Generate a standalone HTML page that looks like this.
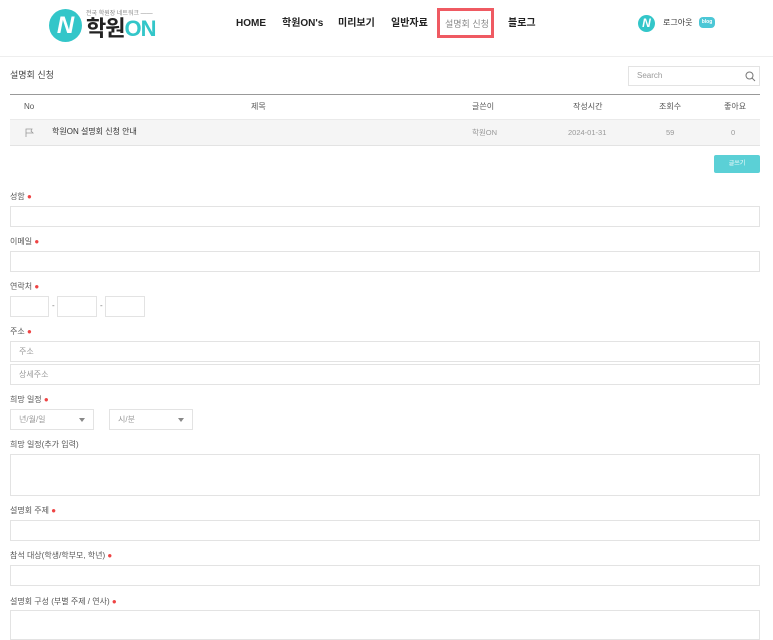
<!DOCTYPE html>
<html><head><meta charset="utf-8"><style>
*{box-sizing:border-box;margin:0;padding:0}
body{width:773px;height:627px;overflow:hidden;background:#fff;font-family:"Liberation Sans","Noto Sans CJK KR",sans-serif;color:#333;position:relative}
.a{position:absolute;line-height:12px;white-space:nowrap}
.nav{font-size:10px;font-weight:bold;color:#222;top:18px}
.lbl{font-size:8px;color:#555;left:10px}
.lbl i{color:#e44;font-style:normal;font-size:8px}
.inp{border:1px solid #e3e3e3;background:#fff;height:21px}
.ph{font-size:8px;color:#999;padding:5px 0 0 8px;line-height:10px}
.th{font-size:8px;color:#555;top:101px}
.td{font-size:7.5px;color:#999;top:127px}
</style></head><body>
<!-- header -->
<div class="a" style="left:49px;top:9px;width:33px;height:33px;border-radius:50%;background:#33c6c9;color:#fff;font-weight:bold;font-style:italic;font-size:24px;text-align:center;line-height:33px">N</div>
<div class="a" style="left:86px;top:8px;font-size:6px;color:#888">전국 학원장 네트워크 ——</div>
<div class="a" style="left:86px;top:17px;font-size:22px;line-height:24px;font-weight:bold;color:#222;letter-spacing:-1px">학원<span style="color:#33c6c9">ON</span></div>
<div class="a nav" style="left:236px">HOME</div>
<div class="a nav" style="left:282px">학원ON's</div>
<div class="a nav" style="left:338px">미리보기</div>
<div class="a nav" style="left:391px">일반자료</div>
<div class="a" style="left:437px;top:8px;width:57px;height:30px;border:3px solid #ef5a62"></div>
<div class="a" style="left:445px;top:18px;font-size:9px;color:#888">설명회 신청</div>
<div class="a nav" style="left:508px">블로그</div>
<div class="a" style="left:638px;top:15px;width:17px;height:17px;border-radius:50%;background:#33c6c9;color:#fff;font-weight:bold;font-style:italic;font-size:12px;text-align:center;line-height:17px">N</div>
<div class="a" style="left:663px;top:17px;font-size:8px;color:#333">로그아웃</div>
<div class="a" style="left:699px;top:17px;width:16px;height:11px;border-radius:4px;background:#4cc7d6;color:#fff;font-size:5px;font-weight:bold;text-align:center;line-height:11px">blog</div>
<div class="a" style="left:0;top:56px;width:773px;height:1px;background:#eee"></div>
<!-- board -->
<div class="a" style="left:10px;top:69px;font-size:9px;color:#444">설명회 신청</div>
<div class="a inp" style="left:628px;top:66px;width:132px;height:20px"><div class="ph" style="padding-top:4px">Search</div></div>
<svg class="a" style="left:745px;top:71px" width="11" height="11"><circle cx="4.5" cy="4.5" r="3.5" fill="none" stroke="#777" stroke-width="1"/><path d="M7 7L10 10" stroke="#777"/></svg>
<div class="a" style="left:10px;top:94px;width:750px;height:1px;background:#999"></div>
<div class="a th" style="left:24px">No</div>
<div class="a th" style="left:251px">제목</div>
<div class="a th" style="left:472px">글쓴이</div>
<div class="a th" style="left:573px">작성시간</div>
<div class="a th" style="left:659px">조회수</div>
<div class="a th" style="left:724px">좋아요</div>
<div class="a" style="left:10px;top:119px;width:750px;height:27px;background:#f5f5f5;border-top:1px solid #eaeaea;border-bottom:1px solid #e3e3e3"></div>
<svg class="a" style="left:25px;top:128px" width="9" height="9"><path d="M1 9V1H7L6 3L8 5H1" fill="none" stroke="#999" stroke-width=".8"/></svg>
<div class="a" style="left:52px;top:126px;font-size:8px;color:#333">학원ON 설명회 신청 안내</div>
<div class="a td" style="left:472px">학원ON</div>
<div class="a td" style="left:568px">2024-01-31</div>
<div class="a td" style="left:666px">59</div>
<div class="a td" style="left:731px">0</div>
<div class="a" style="left:714px;top:155px;width:46px;height:18px;background:#5bd0d6;border-radius:2px;color:#fff;font-size:6px;text-align:center;line-height:18px">글쓰기</div>
<!-- form -->
<div class="a lbl" style="top:191px">성함 <i>●</i></div>
<div class="a inp" style="left:10px;top:206px;width:750px"></div>
<div class="a lbl" style="top:236px">이메일 <i>●</i></div>
<div class="a inp" style="left:10px;top:251px;width:750px"></div>
<div class="a lbl" style="top:281px">연락처 <i>●</i></div>
<div class="a inp" style="left:10px;top:296px;width:39px"></div>
<div class="a" style="left:52px;top:300px;font-size:8px;color:#777">-</div>
<div class="a inp" style="left:57px;top:296px;width:40px"></div>
<div class="a" style="left:100px;top:300px;font-size:8px;color:#777">-</div>
<div class="a inp" style="left:105px;top:296px;width:40px"></div>
<div class="a lbl" style="top:326px">주소 <i>●</i></div>
<div class="a inp" style="left:10px;top:341px;width:750px"><div class="ph">주소</div></div>
<div class="a inp" style="left:10px;top:364px;width:750px"><div class="ph">상세주소</div></div>
<div class="a lbl" style="top:394px">희망 일정 <i>●</i></div>
<div class="a inp" style="left:10px;top:409px;width:84px"><div class="ph">년/월/일</div></div>
<div class="a" style="left:79px;top:418px;width:0;height:0;border-left:3px solid transparent;border-right:3px solid transparent;border-top:4px solid #888"></div>
<div class="a inp" style="left:109px;top:409px;width:84px"><div class="ph">시/분</div></div>
<div class="a" style="left:178px;top:418px;width:0;height:0;border-left:3px solid transparent;border-right:3px solid transparent;border-top:4px solid #888"></div>
<div class="a lbl" style="top:439px">희망 일정(추가 입력)</div>
<div class="a inp" style="left:10px;top:454px;width:750px;height:42px"></div>
<div class="a lbl" style="top:505px">설명회 주제 <i>●</i></div>
<div class="a inp" style="left:10px;top:520px;width:750px"></div>
<div class="a lbl" style="top:550px">참석 대상(학생/학부모, 학년) <i>●</i></div>
<div class="a inp" style="left:10px;top:565px;width:750px"></div>
<div class="a lbl" style="top:596px">설명회 구성 (부별 주제 / 연사) <i>●</i></div>
<div class="a inp" style="left:10px;top:610px;width:750px;height:30px"></div>
</body></html>
